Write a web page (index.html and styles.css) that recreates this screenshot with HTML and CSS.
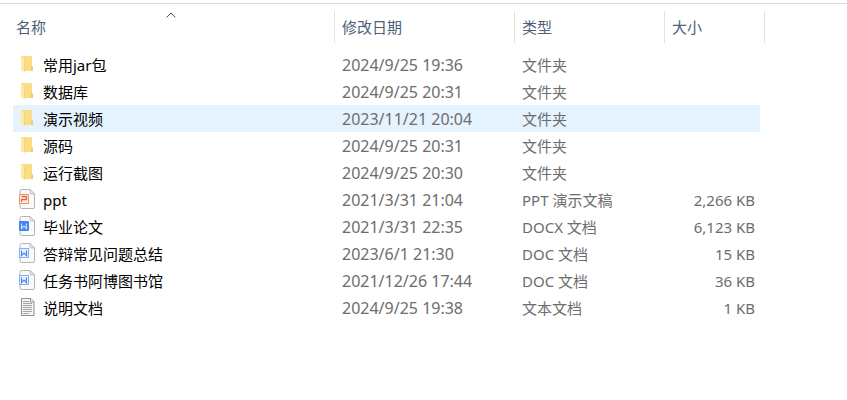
FILE: index.html
```html
<!DOCTYPE html>
<html lang="zh-CN">
<head>
    <meta charset="UTF-8">
    <meta name="viewport" content="width=device-width, initial-scale=1.0">
    <title>文件列表</title>
    <link rel="stylesheet" href="styles.css">
</head>
<body>

    <!-- Icon shapes shared by the rows -->
    <svg class="icon-defs" aria-hidden="true">
        <symbol id="icon-folder" viewBox="0 0 16 20">
            <path d="M2 2h11v10.500h1v4.500h-9z" fill="#fbdd88"/>
            <path d="M12 12.500h2v4.500h-2z" fill="#f0cb68"/>
            <path d="M2 2l3 2.500v13.500l-3-1.500z" fill="#ffe9a9"/>
            <path d="M5.500 4.500v13.500" stroke="#f2d27a" stroke-width="0.700"/>
        </symbol>
        <symbol id="icon-page" viewBox="0 0 16 20">
            <path d="M2.500 0.500h8.500l4.500 4.500v13q0 1.500-1.500 1.500h-11.500q-1.500 0-1.500-1.500v-16q0-1.500 1.500-1.500z" fill="#fafafa" stroke="#b4b4b4"/>
            <path d="M11 0.500v3.500q0 1 1 1h3.500z" fill="#e4e4e4" stroke="#b4b4b4" stroke-width="0.700"/>
        </symbol>
        <symbol id="icon-ppt" viewBox="0 0 16 20">
            <use href="#icon-page"/>
            <rect x="0.500" y="5.500" width="9" height="9" fill="#fff1ea" stroke="#ee9473"/>
            <path d="M2.500 7.500h5v3h-5v2.500" fill="none" stroke="#e9663a" stroke-width="1.300"/>
        </symbol>
        <symbol id="icon-docx" viewBox="0 0 16 20">
            <use href="#icon-page"/>
            <rect x="0" y="5" width="10" height="10" rx="1" fill="#4285f0"/>
            <path d="M2.500 7.500v5l2.500-2.500 2.500 2.500v-5" fill="none" stroke="#c7dcff" stroke-width="1.200"/>
        </symbol>
        <symbol id="icon-doc" viewBox="0 0 16 20">
            <use href="#icon-page"/>
            <rect x="0.500" y="5.500" width="9" height="9" fill="#eaf2ff" stroke="#84aff5"/>
            <path d="M2.500 7.500v5l2.500-2.500 2.500 2.500v-5" fill="none" stroke="#4a86ea" stroke-width="1.200"/>
        </symbol>
        <symbol id="icon-txt" viewBox="0 0 16 20">
            <path d="M2.500 1.500h9.500l3 3v14h-12.500z" fill="#f5f5f5" stroke="#8f8f8f"/>
            <path d="M11.500 1.500v3.500h3.500" fill="#fff" stroke="#8f8f8f"/>
            <path d="M4 4.500h6M4 6.500h9M4 8.500h9M4 10.500h9M4 12.500h9M4 14.500h9M4 16.500h6" stroke="#a6a6a6"/>
        </symbol>
    </svg>

    <main class="file-view">
        <table class="file-table">
            <colgroup>
                <col class="col-name">
                <col class="col-date">
                <col class="col-type">
                <col class="col-size">
            </colgroup>
            <thead>
                <tr>
                    <th class="name-head" aria-sort="ascending">
                        <svg class="sort-arrow" viewBox="0 0 10 6" aria-hidden="true"><path d="M0.500 5.500l4.500-4.500 4.500 4.500" fill="none" stroke="#5a5a5a"/></svg>
                        <button type="button">名称</button>
                    </th>
                    <th><button type="button">修改日期</button></th>
                    <th><button type="button">类型</button></th>
                    <th><button type="button">大小</button></th>
                </tr>
            </thead>
            <tbody>
                <tr>
                    <td><div class="file-name"><svg class="icon"><use href="#icon-folder"/></svg><span>常用jar包</span></div></td>
                    <td class="date">2024/9/25 19:36</td>
                    <td>文件夹</td>
                    <td class="size"></td>
                </tr>
                <tr>
                    <td><div class="file-name"><svg class="icon"><use href="#icon-folder"/></svg><span>数据库</span></div></td>
                    <td class="date">2024/9/25 20:31</td>
                    <td>文件夹</td>
                    <td class="size"></td>
                </tr>
                <tr class="active">
                    <td><div class="file-name"><svg class="icon"><use href="#icon-folder"/></svg><span>演示视频</span></div></td>
                    <td class="date">2023/11/21 20:04</td>
                    <td>文件夹</td>
                    <td class="size"></td>
                </tr>
                <tr>
                    <td><div class="file-name"><svg class="icon"><use href="#icon-folder"/></svg><span>源码</span></div></td>
                    <td class="date">2024/9/25 20:31</td>
                    <td>文件夹</td>
                    <td class="size"></td>
                </tr>
                <tr>
                    <td><div class="file-name"><svg class="icon"><use href="#icon-folder"/></svg><span>运行截图</span></div></td>
                    <td class="date">2024/9/25 20:30</td>
                    <td>文件夹</td>
                    <td class="size"></td>
                </tr>
                <tr>
                    <td><div class="file-name"><svg class="icon"><use href="#icon-ppt"/></svg><span>ppt</span></div></td>
                    <td class="date">2021/3/31 21:04</td>
                    <td>PPT 演示文稿</td>
                    <td class="size">2,266 KB</td>
                </tr>
                <tr>
                    <td><div class="file-name"><svg class="icon"><use href="#icon-docx"/></svg><span>毕业论文</span></div></td>
                    <td class="date">2021/3/31 22:35</td>
                    <td>DOCX 文档</td>
                    <td class="size">6,123 KB</td>
                </tr>
                <tr>
                    <td><div class="file-name"><svg class="icon"><use href="#icon-doc"/></svg><span>答辩常见问题总结</span></div></td>
                    <td class="date">2023/6/1 21:30</td>
                    <td>DOC 文档</td>
                    <td class="size">15 KB</td>
                </tr>
                <tr>
                    <td><div class="file-name"><svg class="icon"><use href="#icon-doc"/></svg><span>任务书阿博图书馆</span></div></td>
                    <td class="date">2021/12/26 17:44</td>
                    <td>DOC 文档</td>
                    <td class="size">36 KB</td>
                </tr>
                <tr>
                    <td><div class="file-name"><svg class="icon"><use href="#icon-txt"/></svg><span>说明文档</span></div></td>
                    <td class="date">2024/9/25 19:38</td>
                    <td>文本文档</td>
                    <td class="size">1 KB</td>
                </tr>
            </tbody>
        </table>
    </main>

</body>
</html>
```
FILE: styles.css
```css
/* General Styles */
body {
    font-family: "Noto Sans", "Noto Sans CJK SC", sans-serif;
    font-size: 15px;
    line-height: 25px;
    margin: 0;
    padding-top: 3px;
    background-color: #fff;
    color: #6d6d6d;
}

.icon-defs {
    display: none;
}

.file-view {
    border-top: 1px solid #d9d9d9;
    padding: 7px 8px;
}

/* File table */
.file-table {
    table-layout: fixed;
    width: 757px;
    border-collapse: separate;
    border-spacing: 0;
}

.col-name {
    width: 327px;
}

.col-date {
    width: 180px;
}

.col-type {
    width: 150px;
}

.col-size {
    width: 100px;
}

.file-table th {
    height: 32px;
    padding: 0 0 0 7px;
    border-right: 1px solid #e2e2e2;
    text-align: left;
}

.file-table th button {
    display: block;
    width: 100%;
    padding: 0;
    border: none;
    background: none;
    font: inherit;
    font-weight: 400;
    color: #4c607a;
    text-align: left;
}

.file-table .name-head {
    position: relative;
    padding-left: 8px;
}

.sort-arrow {
    position: absolute;
    top: 1px;
    left: 50%;
    width: 10px;
    height: 6px;
    transform: translateX(-50%);
}

/* Space between the header and the first row */
.file-table tbody::before {
    content: "";
    display: table-row;
    height: 8px;
}

.file-table td {
    height: 25px;
    padding: 2px 0 0 7px;
    background-clip: padding-box;
    white-space: nowrap;
}

.file-table td:first-child {
    padding-left: 6px;
    border-left: 5px solid transparent;
    color: #000;
}

.file-table td:last-child {
    padding-right: 5px;
    border-right: 5px solid transparent;
}

.file-table tbody tr:hover td,
.file-table .active td {
    background-color: #e5f3ff;
}

.file-table .date {
    font-size: 16px;
}

.file-table .size {
    text-align: right;
}

.file-name {
    display: flex;
    align-items: center;
    gap: 8px;
}

.icon {
    flex: none;
    width: 16px;
    height: 20px;
    margin-bottom: 3px;
}
```
